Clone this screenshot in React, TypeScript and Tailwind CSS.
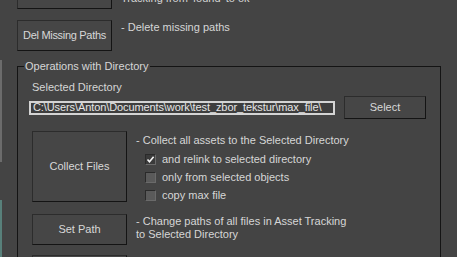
import React from 'react';

const font = { fontFamily: '"Liberation Sans", Arial, sans-serif' };

const MaxButton = ({ label, className = '' }: { label: string; className?: string }) => (
  <button
    className={`flex shrink-0 items-center justify-center border border-[#2c2c2c] border-r-[#141414] border-b-[#141414] bg-[#464646] text-[11px] text-[#d8d8d8] ${className}`}
  >
    {label}
  </button>
);

const CheckBox = ({ checked, label }: { checked?: boolean; label: string }) => (
  <div className="flex h-[18px] items-center">
    <span
      className={`flex h-[11px] w-[11px] items-center justify-center border border-[#2a2a2a] border-r-[#6a6a6a] border-b-[#6a6a6a] ${
        checked ? 'bg-[#3a3a3a]' : 'bg-[#5a5a5a]'
      }`}
    >
      {checked && (
        <svg width="9" height="9" viewBox="0 0 9 9">
          <path d="M1.5 4.5 L3.5 6.8 L7.6 1.8" fill="none" stroke="#f2f2f2" strokeWidth="1.6" />
        </svg>
      )}
    </span>
    <span className="ml-[6px]">{label}</span>
  </div>
);

export default function App() {
  return (
    <div
      className="flex h-[257px] w-[457px] overflow-hidden bg-[#444444] text-[11px] leading-[13px] text-[#d6d6d6]"
      style={font}
    >
      {/* left edge of neighbouring panel */}
      <div className="flex w-[2px] shrink-0 flex-col">
        <div className="h-[60px]" />
        <div className="h-[102px] bg-[#6c6c6c]" />
        <div className="h-[38px]" />
        <div className="flex-1 bg-[#58807a]" />
      </div>

      <div className="flex flex-1 flex-col pl-[15px] pr-[16px]">
        {/* Top row (partially scrolled) */}
        <div className="mt-[-22px] flex">
          <MaxButton label="" className="h-[31px] w-[95px]" />
          <div className="ml-[9px] mt-[1px]">
            <div>- Set all paths status in Asset</div>
            <div>Tracking from 'found' to ok</div>
          </div>
        </div>

        <div className="mt-[11px] flex">
          <MaxButton label="Del Missing Paths" className="h-[31px] w-[95px] tracking-[-0.3px]" />
          <div className="ml-[9px] mt-[1px]">- Delete missing paths</div>
        </div>

        <fieldset className="mt-[9px] w-[424px] border border-[#141414] pb-[20px]">
          <legend className="ml-[6px] px-[1px]">Operations with Directory</legend>

          <div className="pl-[14px] pt-[8px]">Selected Directory</div>

          <div className="mt-[2px] flex items-center pl-[11px]">
            <div className="flex h-[14px] w-[306px] items-center overflow-hidden whitespace-nowrap border-2 border-[#d4d4d4] bg-[#3e3e3e] pl-[2px] tracking-[-0.1px] text-[#e6e6e6]">
              C:\Users\Anton\Documents\work\test_zbor_tekstur\max_file\
            </div>
            <MaxButton label="Select" className="ml-[9px] h-[23px] w-[82px]" />
          </div>

          <div className="mt-[12px] flex pl-[14px]">
            <MaxButton label="Collect Files" className="h-[71px] w-[95px]" />
            <div className="ml-[9px] mt-[3px]">
              <div>- Collect all assets to the Selected Directory</div>
              <div className="ml-[9px] mt-[3px]">
                <CheckBox checked label="and relink to selected directory" />
                <CheckBox label="only from selected objects" />
                <CheckBox label="copy max file" />
              </div>
            </div>
          </div>

          <div className="mt-[10px] flex pl-[14px]">
            <MaxButton label="Set Path" className="h-[31px] w-[95px]" />
            <div className="ml-[9px] mt-[1px]">
              <div>- Change paths of all files in Asset Tracking</div>
              <div>to Selected Directory</div>
            </div>
          </div>

          <div className="mt-[10px] flex pl-[14px]">
            <MaxButton label="" className="h-[31px] w-[95px]" />
            <div className="ml-[9px] mt-[1px]">
              <div>- Rename cyrillic symbols and copy to Selected Directory</div>
            </div>
          </div>
        </fieldset>
      </div>
    </div>
  );
}
